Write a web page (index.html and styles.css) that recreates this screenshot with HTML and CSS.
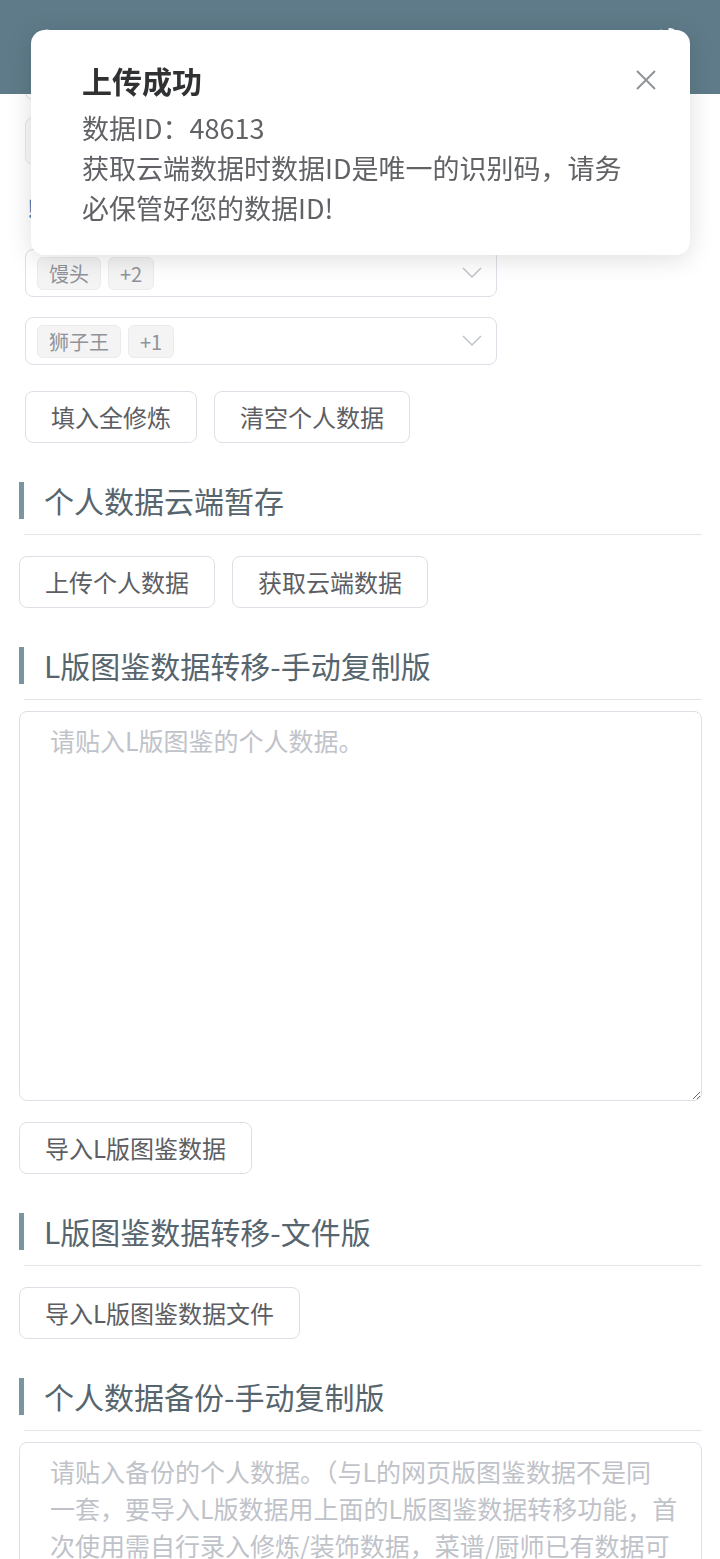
FILE: index.html
```html
<!DOCTYPE html>
<html lang="zh-CN">
<head>
<meta charset="utf-8">
<meta name="viewport" content="width=720">
<title>个人数据</title>
<link rel="stylesheet" href="styles.css">
</head>
<body>
<header class="topbar">
  <svg class="top-icon top-icon-left" width="24" height="24" viewBox="0 0 24 24"><circle cx="12" cy="12" r="9" fill="none" stroke="#fff" stroke-width="3"/></svg>
  <svg class="top-icon top-icon-right" width="40" height="40" viewBox="0 0 40 40"><circle cx="20" cy="20" r="14" fill="none" stroke="#fff" stroke-width="6" stroke-dasharray="5 6"/><circle cx="20" cy="20" r="10" fill="none" stroke="#fff" stroke-width="3"/></svg>
</header>

<main class="page">
  <div class="form">
    <div class="select select-plain"></div>
    <div class="select select-grey"></div>
    <p class="tip">!</p>
    <div class="select">
      <span class="tag">馒头</span><span class="tag">+2</span>
      <svg class="chevron" width="20" height="12" viewBox="0 0 20 12"><polyline points="1,1 10,10 19,1" fill="none" stroke="#c0c4cc" stroke-width="1.5"/></svg>
    </div>
    <div class="select">
      <span class="tag">狮子王</span><span class="tag">+1</span>
      <svg class="chevron" width="20" height="12" viewBox="0 0 20 12"><polyline points="1,1 10,10 19,1" fill="none" stroke="#c0c4cc" stroke-width="1.5"/></svg>
    </div>
    <div class="btn-row btn-row-form">
      <button class="btn">填入全修炼</button>
      <button class="btn">清空个人数据</button>
    </div>
  </div>

  <section class="section">
    <h2 class="sec-title">个人数据云端暂存</h2>
    <hr class="divider">
    <div class="btn-row">
      <button class="btn">上传个人数据</button>
      <button class="btn">获取云端数据</button>
    </div>
  </section>

  <section class="section">
    <h2 class="sec-title">L版图鉴数据转移-手动复制版</h2>
    <hr class="divider">
    <textarea class="area area-tall" placeholder="请贴入L版图鉴的个人数据。"></textarea>
    <div class="btn-row">
      <button class="btn">导入L版图鉴数据</button>
    </div>
  </section>

  <section class="section">
    <h2 class="sec-title">L版图鉴数据转移-文件版</h2>
    <hr class="divider">
    <div class="btn-row">
      <button class="btn">导入L版图鉴数据文件</button>
    </div>
  </section>

  <section class="section">
    <h2 class="sec-title">个人数据备份-手动复制版</h2>
    <hr class="divider">
    <textarea class="area area-backup" placeholder="请贴入备份的个人数据。（与L的网页版图鉴数据不是同&#10;一套，要导入L版数据用上面的L版图鉴数据转移功能，首&#10;次使用需自行录入修炼/装饰数据，菜谱/厨师已有数据可"></textarea>
  </section>
</main>

<div class="notice" role="alert">
  <h3 class="notice-title">上传成功</h3>
  <p class="notice-body">数据ID：48613<br>获取云端数据时数据ID是唯一的识别码，请务<br>必保管好您的数据ID!</p>
  <svg class="notice-close" width="22" height="22" viewBox="0 0 22 22"><path d="M2 2 L20 20 M20 2 L2 20" stroke="#909399" stroke-width="2" fill="none"/></svg>
</div>
</body>
</html>
```

FILE: styles.css
```css
* { box-sizing: border-box; }

html, body {
  margin: 0;
  padding: 0;
  background: #ffffff;
  font-family: "Noto Sans CJK SC", "Noto Sans", sans-serif;
  color: #606266;
}

.topbar {
  position: fixed;
  top: 0;
  left: 0;
  right: 0;
  height: 94px;
  background: #5f7b89;
  z-index: 10;
}

.top-icon { position: absolute; }
.top-icon-left { left: 35px; top: 28px; }
.top-icon-right { left: 648px; top: 25px; }

.page {
  padding-top: 52px;
  padding-bottom: 40px;
}

.form {
  padding: 0 0 0 25px;
}

.select {
  width: 472px;
  height: 48px;
  border: 1px solid #dcdfe6;
  border-radius: 8px;
  background: #fff;
  display: flex;
  align-items: center;
  gap: 7px;
  padding-left: 11px;
  padding-right: 14px;
  margin-top: 20px;
}

.select-plain { margin-top: 0; }
.select-grey { margin-top: 17px; background: #f8f9fb; border-color: #e4e7ed; }

.tip {
  margin: 28px 0 0 2px;
  font-size: 24px;
  line-height: 30px;
  color: #4b7fb5;
  white-space: nowrap;
}

.tip + .select { margin-top: 26px; }

.tag {
  height: 33px;
  padding: 0 11px;
  display: inline-flex;
  align-items: center;
  background: #f4f4f5;
  border: 1px solid #ebebed;
  border-radius: 6px;
  font-size: 20px;
  color: #909399;
}

.chevron {
  margin-left: auto;
}

.btn-row {
  display: flex;
  gap: 17px;
  margin-top: 21px;
}

.btn-row-form { margin-top: 26px; }

.btn {
  height: 52px;
  padding: 0 25px;
  border: 1px solid #dcdfe6;
  border-radius: 8px;
  background: #fff;
  font-family: "Noto Sans CJK SC", "Noto Sans", sans-serif;
  font-size: 24px;
  color: #5c5e63;
  line-height: 1;
}

.section {
  padding: 0 18px 0 19px;
}

.sec-title {
  margin: 39px 0 0 0;
  height: 37px;
  border-left: 5px solid #7a95a2;
  padding-left: 20px;
  font-size: 30px;
  line-height: 37px;
  font-weight: normal;
  color: #56656e;
  white-space: nowrap;
}

.divider {
  margin: 15px 0 0 5px;
  border: 0;
  height: 1px;
  background: #e2e5e9;
}

.area {
  display: block;
  width: 100%;
  margin-top: 11px;
  padding: 10px 18px 10px 30px;
  border: 1px solid #dcdfe6;
  border-radius: 8px;
  font-family: "Noto Sans CJK SC", "Noto Sans", sans-serif;
  font-size: 25px;
  line-height: 37px;
  color: #606266;
  resize: vertical;
  background: #fff;
}

.area::placeholder { color: #bfc3c9; }

.area-tall { height: 390px; }
.area-backup { height: 320px; }

.notice {
  position: fixed;
  top: 30px;
  left: 31px;
  width: 659px;
  height: 225px;
  background: #fff;
  border-radius: 14px;
  box-shadow: 0 4px 26px rgba(0, 0, 0, 0.13);
  padding: 28px 20px 0 51px;
  z-index: 20;
}

.notice-title {
  margin: 0;
  font-size: 30px;
  line-height: 44px;
  font-weight: bold;
  color: #303133;
}

.notice-body {
  margin: 6px 0 0 0;
  font-size: 27px;
  line-height: 40px;
  color: #606266;
  white-space: nowrap;
}

.notice-close {
  position: absolute;
  left: 604px;
  top: 39px;
}
```
